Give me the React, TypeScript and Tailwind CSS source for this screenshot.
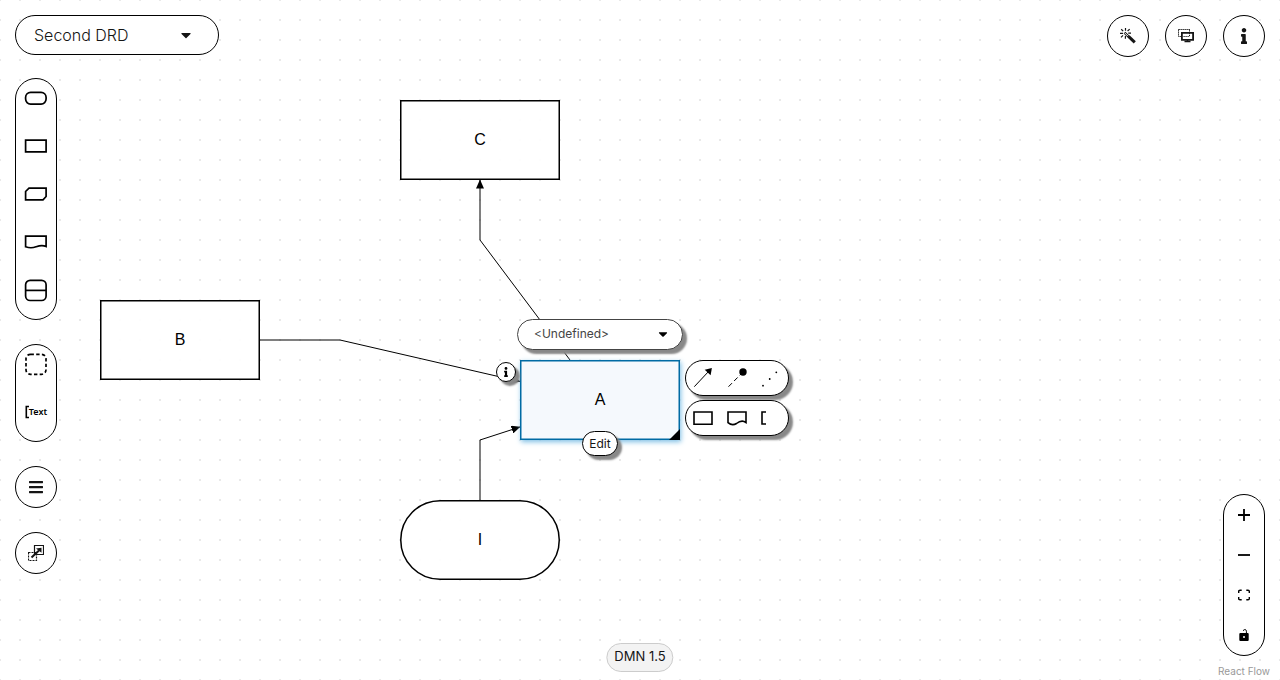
import type { ReactNode } from "react";
import { FaBars, FaCaretDown, FaInfo } from "react-icons/fa";

const circle =
  "pointer-events-auto flex size-[42px] items-center justify-center rounded-full border border-black bg-white text-[#151515]";
const palette =
  "pointer-events-auto flex w-[42px] flex-col items-center gap-4 rounded-full border border-black bg-white pt-[3px] pb-[13px]";
const popup =
  "absolute rounded-full border bg-white shadow-[4px_4px_2px_#888888]";

function PaletteItem({ label, children }: { label: string; children: ReactNode }) {
  return (
    <button type="button" aria-label={label} className="flex h-8 w-8 items-center justify-center">
      <svg viewBox="0 0 24 24" className="size-6" fill="none" stroke="black" strokeWidth="1.7">
        {children}
      </svg>
    </button>
  );
}

function MenuItem({ label, children }: { label: string; children: ReactNode }) {
  return (
    <button type="button" aria-label={label} className="size-5">
      <svg viewBox="0 0 20 20" className="size-5" fill="none" stroke="black" strokeWidth="1.6">
        {children}
      </svg>
    </button>
  );
}

function Node({ name, place, round, selected }: { name: string; place: string; round?: boolean; selected?: boolean }) {
  return (
    <div
      className={`absolute flex h-20 w-40 items-center justify-center text-base text-black ${place} ${
        selected ? "shadow-[1px_2px_5px_#7fbfe5]" : ""
      }`}
    >
      <svg viewBox="0 0 160 80" className="absolute inset-0 h-20 w-40">
        <rect
          x="0.75"
          y="0.75"
          width="158.5"
          height="78.5"
          rx={round ? 39.25 : 0}
          fill={selected ? "#f5f9fd" : "white"}
          fillOpacity={selected ? 1 : 0.9}
          stroke={selected ? "#006ba4" : "black"}
          strokeWidth="1.5"
        />
      </svg>
      <span className="relative font-['Liberation_Sans',sans-serif]">{name}</span>
    </div>
  );
}

function Edges() {
  return (
    <svg className="absolute inset-0 h-full w-full" fill="none" stroke="black" strokeWidth="1">
      <defs>
        <marker
          id="arrow"
          viewBox="0 0 9 8"
          refX="8.5"
          refY="4"
          markerWidth="9"
          markerHeight="8"
          markerUnits="userSpaceOnUse"
          orient="auto"
        >
          <path d="M0 0 9 4 0 8Z" fill="black" stroke="none" />
        </marker>
      </defs>
      <path d="M570 360 480 240V180" markerEnd="url(#arrow)" />
      <path d="M260 340H340L520 381.5" markerEnd="url(#arrow)" />
      <path d="M480 500V440L520 427" markerEnd="url(#arrow)" />
    </svg>
  );
}

function SelectedNode() {
  return (
    <>
      <Node name="A" place="top-[360px] left-[520px]" selected />
      <svg viewBox="0 0 11 11" className="absolute top-[429px] left-[669px] size-[11px]">
        <path d="M11 0V11H0Z" />
      </svg>

      <div className={`${popup} border-[#444444] top-[319px] left-[517px] h-[31px] w-[166px]`}>
        <select
          aria-label="Data type"
          className="h-full w-full appearance-none rounded-full bg-transparent px-4 pb-0.5 text-xs text-[#444444] outline-none"
        >
          <option>&lt;Undefined&gt;</option>
        </select>
        <FaCaretDown className="pointer-events-none absolute top-[7px] right-3 size-[14px] text-black" />
      </div>

      <button type="button" aria-label="Properties" className={`${popup} border-black top-[362px] left-[496px] flex size-5 items-center justify-center`}>
        <FaInfo className="size-[10px]" />
      </button>
      <button type="button" className={`${popup} border-black top-[431px] left-[582px] h-[25px] w-9 text-xs leading-none text-[#151515]`}>
        Edit
      </button>

      <div className={`${popup} border-black top-[360px] left-[685px] flex h-9 w-[104px] items-center gap-[14px] pl-[7px]`}>
        <MenuItem label="Information requirement">
          <path d="M1.3 18.7 16 3" strokeWidth="1" />
          <path d="M18.9 0 17.6 7.2 11.7 1.8Z" fill="black" stroke="none" />
        </MenuItem>
        <MenuItem label="Authority requirement">
          <path d="M1.5 18.7 16 4" strokeWidth="1" strokeDasharray="5 3" />
          <circle cx="16" cy="4" r="3.7" fill="black" stroke="none" />
        </MenuItem>
        <MenuItem label="Association">
          <path d="M2 17.7h.01M8.7 11h.01M15.3 4.3h.01" strokeWidth="1.8" strokeLinecap="round" />
        </MenuItem>
      </div>
      <div className={`${popup} border-black top-[400px] left-[685px] flex h-9 w-[104px] items-center gap-[14px] pl-[7px]`}>
        <MenuItem label="Decision">
          <path d="M1 4H19V16.3H1Z" />
        </MenuItem>
        <MenuItem label="Knowledge source">
          <path d="M1 4H19V14.5C15 11.5 12 13.5 9.5 15.5 6.5 17.4 3.5 16.8 1 14.7Z" />
        </MenuItem>
        <MenuItem label="Text annotation">
          <path d="M5 4H1V16H5" />
        </MenuItem>
      </div>
    </>
  );
}

export default function App() {
  return (
    <main className="relative min-h-screen overflow-hidden bg-white font-['Inter','Noto_Sans',sans-serif]">
      <div className="absolute inset-0 bg-[radial-gradient(circle_at_center,#e9e9e9_1px,transparent_1px)] bg-[size:20px_20px] bg-[position:-10px_-10px]" />
      <div className="absolute inset-0">
        <Node name="C" place="top-[100px] left-[400px]" />
        <Node name="B" place="top-[300px] left-[100px]" />
        <Node name="I" place="top-[500px] left-[400px]" round />
        <Edges />
        <SelectedNode />
      </div>

      <div className="pointer-events-none relative flex min-h-screen flex-col px-[15px] pt-[15px] pb-6">
        <header className="flex items-start justify-between">
          <button
            type="button"
            className="pointer-events-auto flex h-10 w-[204px] items-center justify-between rounded-full border border-black bg-white pr-6 pl-[18px] text-base font-light text-[#151515]"
          >
            <span>Second DRD</span>
            <FaCaretDown className="size-4" />
          </button>
          <div className="flex gap-4">
            <button type="button" aria-label="Autolayout" className={circle}>
              <svg viewBox="0 0 16 16" className="size-4" fill="none" stroke="currentColor">
                <path d="m8.5 8.3 6.3 6" strokeWidth="3" />
                <path d="m4.5 4.7 4 4" strokeWidth="2.4" />
                <path d="m4.8 5 3 3" stroke="white" strokeWidth="1" />
                <path d="M5.5 0v2.8M1.2 1.2l2 1.9M0 5.3h3M1 9.3l2-2M5.4 8v2.7M7.6 3l2.1-1.9M8.2 5.2H11" strokeWidth="1.2" />
              </svg>
            </button>
            <button type="button" aria-label="Toggle overlays" className={circle}>
              <svg viewBox="0 0 16 16" className="size-4" fill="none" stroke="currentColor">
                <path d="M.5 1.5H12M.5 1.5V8.5H3M11.5 1.5V4" strokeDasharray="1.3 .7" />
                <path d="M3.9 4.9h11.2v6.9H3.9Z" strokeWidth="1.8" />
                <path d="M5.5 8.5h6M11.5 5v4" strokeDasharray="1.2 .8" />
                <path d="M9.5 12v2M6.5 13.5h6" strokeWidth="1.4" />
              </svg>
            </button>
            <button type="button" aria-label="Properties panel" className={circle}>
              <FaInfo className="size-4" />
            </button>
          </div>
        </header>

        <div className="flex flex-1 justify-between">
          <nav aria-label="Palette" className="mt-[21px] flex flex-col gap-6">
            <div className={palette}>
              <PaletteItem label="Input data">
                <rect x="1.6" y="6.3" width="20.5" height="11.8" rx="5" />
              </PaletteItem>
              <PaletteItem label="Decision">
                <path d="M1.6 6.2H22.1V17.8H1.6Z" />
              </PaletteItem>
              <PaletteItem label="Business knowledge model">
                <path d="M5 6.2H22.1V14.5L19 17.8H1.6V9.5Z" />
              </PaletteItem>
              <PaletteItem label="Knowledge source">
                <path d="M1.6 6.2H22.1V16.5C18 14.5 15.5 15.5 12 16.8 8.5 18.1 5 18 1.6 16.8Z" />
              </PaletteItem>
              <PaletteItem label="Decision service">
                <rect x="1.6" y="2.3" width="20.5" height="20.2" rx="4.5" />
                <path d="M2 12.4H22" />
              </PaletteItem>
            </div>
            <div className={palette}>
              <PaletteItem label="Group">
                <rect x="2" y="2.3" width="20" height="20" rx="4.5" strokeDasharray="3.4 2.3" />
              </PaletteItem>
              <button type="button" className="flex h-8 w-8 items-center justify-center font-['Noto_Sans',sans-serif] text-[9px] font-semibold text-black">
                <svg viewBox="0 0 4 14" className="h-[14px] w-1" fill="none" stroke="black" strokeWidth="1.6">
                  <path d="M4 1.5H1.3V12.5H4" />
                </svg>
                Text
              </button>
            </div>
            <button type="button" aria-label="DRG nodes" className={circle}>
              <FaBars className="size-4" />
            </button>
            <button type="button" aria-label="External nodes" className={circle}>
              <svg viewBox="0 0 16 16" className="size-4" fill="none" stroke="currentColor">
                <path d="M6.5.5h9v9h-9Z" strokeWidth="1.2" />
                <path d="M.5 7.5h8v8h-8Z" strokeWidth="1.2" strokeDasharray="2 1" />
                <path d="m3.5 12.5 7.5-7" strokeWidth="2" />
                <path d="M13.5 2.8v5L8 3.4Z" fill="currentColor" stroke="none" />
              </svg>
            </button>
          </nav>

          <div className="pointer-events-auto flex w-[42px] flex-col self-end rounded-full border border-black bg-white">
            <button type="button" aria-label="Zoom in" className="flex h-10 items-center justify-center">
              <svg viewBox="0 0 12 12" className="size-3" stroke="black" strokeWidth="1.8">
                <path d="M0 6H12M6 0V12" />
              </svg>
            </button>
            <button type="button" aria-label="Zoom out" className="flex h-10 items-center justify-center">
              <svg viewBox="0 0 12 12" className="size-3" stroke="black" strokeWidth="1.8">
                <path d="M0 6H12" />
              </svg>
            </button>
            <button type="button" aria-label="Fit view" className="flex h-10 items-center justify-center">
              <svg viewBox="0 0 12 12" className="size-3" fill="none" stroke="black" strokeWidth="1.4">
                <path d="M3.7 1.2H2Q.7 1.2.7 2.2V4M8.3 1.2H10q1.3 0 1.3 1V4M3.7 10.8H2Q.7 10.8.7 9.8V8M8.3 10.8H10q1.3 0 1.3-1V8" />
              </svg>
            </button>
            <button type="button" aria-label="Lock" className="flex h-10 items-center justify-center">
              <svg viewBox="0 0 12 14" className="h-[14px] w-3">
                <path d="M5 2.7Q7.8 0 8.4 3.2V6" fill="none" stroke="black" />
                <rect x="1.3" y="5" width="9.4" height="8" rx="1" />
                <circle cx="6" cy="9" r="1" fill="white" />
              </svg>
            </button>
          </div>
        </div>
      </div>

      <div className="absolute bottom-2 left-1/2 flex h-[29px] -translate-x-1/2 items-center rounded-full border border-[#cccccc] bg-[#f3f3f3] px-[7px] pb-px text-[13px] whitespace-nowrap text-[#151515]">
        DMN 1.5
      </div>
      <a href="#react-flow" className="absolute right-[10px] bottom-0 text-[10px] leading-[18px] text-[#999999]">
        React Flow
      </a>
    </main>
  );
}
